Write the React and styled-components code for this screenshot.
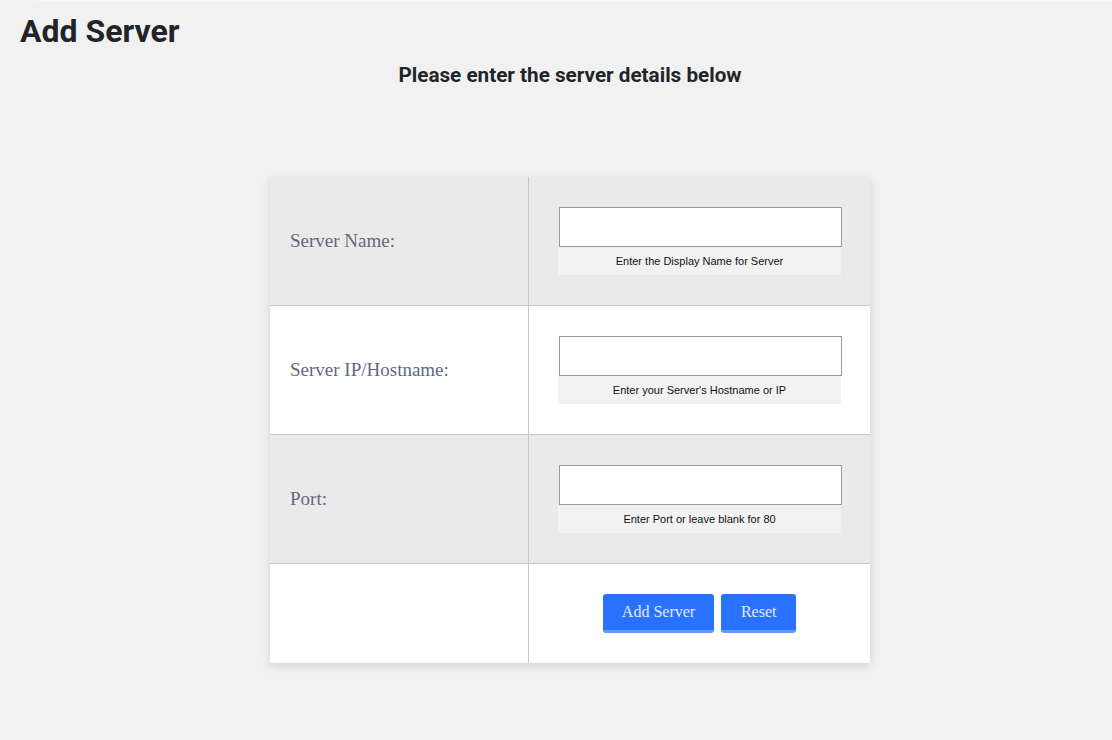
import React from "react";
import styled, { createGlobalStyle } from "styled-components";

const Global = createGlobalStyle`
  html, body { margin: 0; padding: 0; background: #f1f1f1; }
  body { font-family: Roboto, "Liberation Sans", sans-serif; color: #222; }
  * { box-sizing: border-box; }
`;

const Page = styled.div`
  min-height: 740px;
  background: #f1f1f1;
`;

const TopRule = styled.div`
  height: 1px;
  margin-left: 35px;
  background: #f7f7f7;
`;

const Title = styled.h1`
  margin: 11px 0 0 20px;
  font-family: Roboto, sans-serif;
  font-size: 32px;
  font-weight: 700;
  color: #212529;
  line-height: normal;
`;

const Content = styled.main`
  padding-left: 28px;
  display: flex;
  flex-direction: column;
  align-items: center;
`;

const Subtitle = styled.h2`
  margin: 13px 0 0;
  font-family: Roboto, sans-serif;
  font-size: 20.7px;
  font-weight: 700;
  color: #212529;
  line-height: 24px;
`;

const Card = styled.form`
  margin-top: 90px;
  width: 600px;
  background: #fff;
  box-shadow: 0 3px 10px rgba(0, 0, 0, 0.13);
  border-radius: 2px;
  overflow: hidden;
`;

const Row = styled.div`
  display: grid;
  grid-template-columns: 259px 1fr;
  height: ${(p) => p.$h}px;
  background: ${(p) => (p.$shaded ? "#eaeaea" : "#ffffff")};
  border-bottom: ${(p) => (p.$last ? "none" : "1px solid #c6c4d6")};
`;

const LabelCell = styled.div`
  display: flex;
  align-items: center;
  padding-left: 20px;
  border-right: 1px solid #c6c4d6;
  font-family: "Liberation Serif", "Times New Roman", serif;
  font-size: 19px;
  color: #5f6a80;
`;

const FieldCell = styled.div`
  display: flex;
  flex-direction: column;
  justify-content: center;
  padding-left: 30px;
`;

const Input = styled.input`
  width: 283px;
  height: 40px;
  border: 1px solid #9a9a9a;
  background: #fff;
  margin: 0;
  padding: 0 8px;
  font-size: 14px;
  outline: none;
`;

const Hint = styled.div`
  width: 283px;
  height: 28px;
  margin-left: -1px;
  background: #f2f2f2;
  font-family: "Liberation Sans", Arial, sans-serif;
  font-size: 11px;
  line-height: 28px;
  text-align: center;
  color: #111;
`;

const ButtonCell = styled.div`
  display: flex;
  align-items: center;
  justify-content: center;
  gap: 7px;
`;

const Button = styled.button`
  height: 39px;
  padding: 0 19px;
  min-width: 75px;
  border: none;
  border-bottom: 3px solid #5f9bff;
  border-radius: 3px;
  background: #2872ff;
  color: #e4ecff;
  font-family: "Liberation Serif", "Times New Roman", serif;
  font-size: 16px;
  cursor: pointer;
`;

const fields = [
  { label: "Server Name:", hint: "Enter the Display Name for Server", shaded: true },
  { label: "Server IP/Hostname:", hint: "Enter your Server's Hostname or IP", shaded: false },
  { label: "Port:", hint: "Enter Port or leave blank for 80", shaded: true },
];

export default function App() {
  return (
    <Page>
      <Global />
      <TopRule />
      <Title>Add Server</Title>
      <Content>
        <Subtitle>Please enter the server details below</Subtitle>
        <Card onSubmit={(e) => e.preventDefault()}>
          {fields.map((f) => (
            <Row key={f.label} $h={129} $shaded={f.shaded}>
              <LabelCell>{f.label}</LabelCell>
              <FieldCell>
                <Input type="text" />
                <Hint>{f.hint}</Hint>
              </FieldCell>
            </Row>
          ))}
          <Row $h={99} $last>
            <LabelCell />
            <ButtonCell>
              <Button type="submit">Add Server</Button>
              <Button type="reset">Reset</Button>
            </ButtonCell>
          </Row>
        </Card>
      </Content>
    </Page>
  );
}
